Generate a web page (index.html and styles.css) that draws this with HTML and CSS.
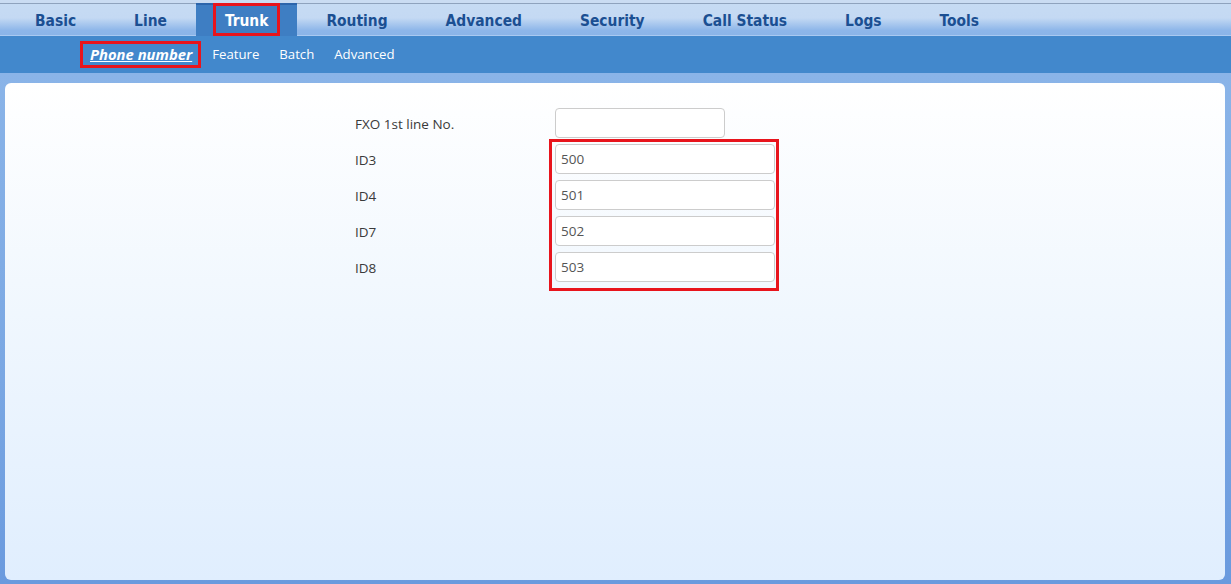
FILE: index.html
```html
<!DOCTYPE html>
<html>
<head>
<meta charset="utf-8">
<link rel="stylesheet" href="styles.css">
</head>
<body>
<div class="topbar">
  <ul class="tabs">
    <li class="tab">Basic</li>
    <li class="tab">Line</li>
    <li class="tab active"><span class="mark">Trunk</span></li>
    <li class="tab">Routing</li>
    <li class="tab">Advanced</li>
    <li class="tab">Security</li>
    <li class="tab">Call Status</li>
    <li class="tab">Logs</li>
    <li class="tab">Tools</li>
  </ul>
</div>
<div class="subbar">
  <ul class="subtabs">
    <li class="sub current"><span class="mark">Phone number</span></li>
    <li class="sub">Feature</li>
    <li class="sub">Batch</li>
    <li class="sub">Advanced</li>
  </ul>
</div>
<div class="main">
  <div class="panel">
    <div class="form">
      <label class="lbl">FXO 1st line No.</label>
      <input class="field short" type="text" value="">
      <label class="lbl">ID3</label>
      <input class="field" type="text" value="500">
      <label class="lbl">ID4</label>
      <input class="field" type="text" value="501">
      <label class="lbl">ID7</label>
      <input class="field" type="text" value="502">
      <label class="lbl">ID8</label>
      <input class="field" type="text" value="503">
      <div class="annot"></div>
    </div>
  </div>
</div>
</body>
</html>
```

FILE: styles.css
```css
* { box-sizing: border-box; }
html, body { margin: 0; padding: 0; }
body {
  width: 1231px;
  height: 584px;
  overflow: hidden;
  font-family: "Open Sans", "Noto Sans", sans-serif;
  background: #6a9ade;
}
ul { list-style: none; margin: 0; padding: 0; }

.topbar {
  height: 36px;
  padding-top: 3px;
  background: #cadcf2;
}
.tabs {
  display: flex;
  height: 33px;
  padding-left: 6px;
  border-top: 1px solid #8fa3bd;
  border-bottom: 1px solid #a9c9f1;
  background: linear-gradient(to bottom, #c6dbf3 0%, #c4d9f3 45%, #8db6e9 85%, #8ab4e8 100%);
}
.tab {
  display: flex;
  align-items: center;
  padding: 0 29px;
  padding-top: 2px;
  font-family: "DejaVu Sans Condensed", "DejaVu Sans", sans-serif;
  font-stretch: condensed;
  font-weight: bold;
  font-size: 15.4px;
  color: #1b4f92;
  white-space: nowrap;
}
.tab.active {
  margin-top: -1px;
  margin-bottom: -1px;
  padding: 0 17px;
  align-items: stretch;
  background: #3e7ec3;
  box-shadow: inset 0 2px 0 #2c65ab;
  color: #fff;
}
.tab.active .mark {
  display: flex;
  align-items: center;
  padding: 2px 9px 0;
  border: 3px solid #e8141c;
}

.subbar {
  height: 37px;
  background: #4288cc;
}
.subtabs {
  display: flex;
  align-items: center;
  height: 37px;
  padding-left: 80px;
  gap: 20px;
}
.sub {
  font-size: 13.2px;
  color: #fff;
  white-space: nowrap;
  margin-top: -2px;
}
.sub.current { margin-right: -9px; margin-top: 0; }
.sub.current .mark {
  display: block;
  height: 27px;
  line-height: 20px;
  padding: 0 6px 0 7px;
  margin-top: -1px;
  border: 3px solid #e8141c;
  font-weight: bold;
  font-style: italic;
  font-size: 14.8px;
  text-decoration: underline;
}

.main {
  height: 511px;
  padding: 10px 6px 4px 5px;
  background: linear-gradient(to bottom, #8ab4e8 0%, #7aa7e3 60%, #6a9ade 100%);
}
.panel {
  height: 497px;
  border-radius: 6px;
  background: linear-gradient(to bottom, #ffffff 0%, #f2f8fe 40%, #e0eefe 100%);
  padding: 25px 0 0 350px;
}
.form {
  display: grid;
  grid-template-columns: 200px 220px;
  grid-template-rows: repeat(5, 30px);
  row-gap: 6px;
  align-items: center;
}
.lbl {
  grid-column: 1;
  font-size: 13.5px;
  color: #3a3a3a;
  padding-top: 2px;
}
.field {
  grid-column: 2;
  height: 30px;
  width: 220px;
  border: 1px solid #cccccc;
  border-radius: 4px;
  background: #fff;
  padding: 0 5px;
  font-family: "Open Sans", "Noto Sans", sans-serif;
  font-size: 13.5px;
  color: #555;
  outline: none;
}
.lbl:nth-of-type(1), .field:nth-of-type(1) { grid-row: 1; }
.lbl:nth-of-type(2), .field:nth-of-type(2) { grid-row: 2; }
.lbl:nth-of-type(3), .field:nth-of-type(3) { grid-row: 3; }
.lbl:nth-of-type(4), .field:nth-of-type(4) { grid-row: 4; }
.lbl:nth-of-type(5), .field:nth-of-type(5) { grid-row: 5; }
.field.short { width: 170px; }
.annot {
  grid-column: 2;
  grid-row: 2 / 6;
  align-self: stretch;
  justify-self: stretch;
  margin: -5px -4px -9px -6px;
  border: 3px solid #e8141c;
  pointer-events: none;
}
```
